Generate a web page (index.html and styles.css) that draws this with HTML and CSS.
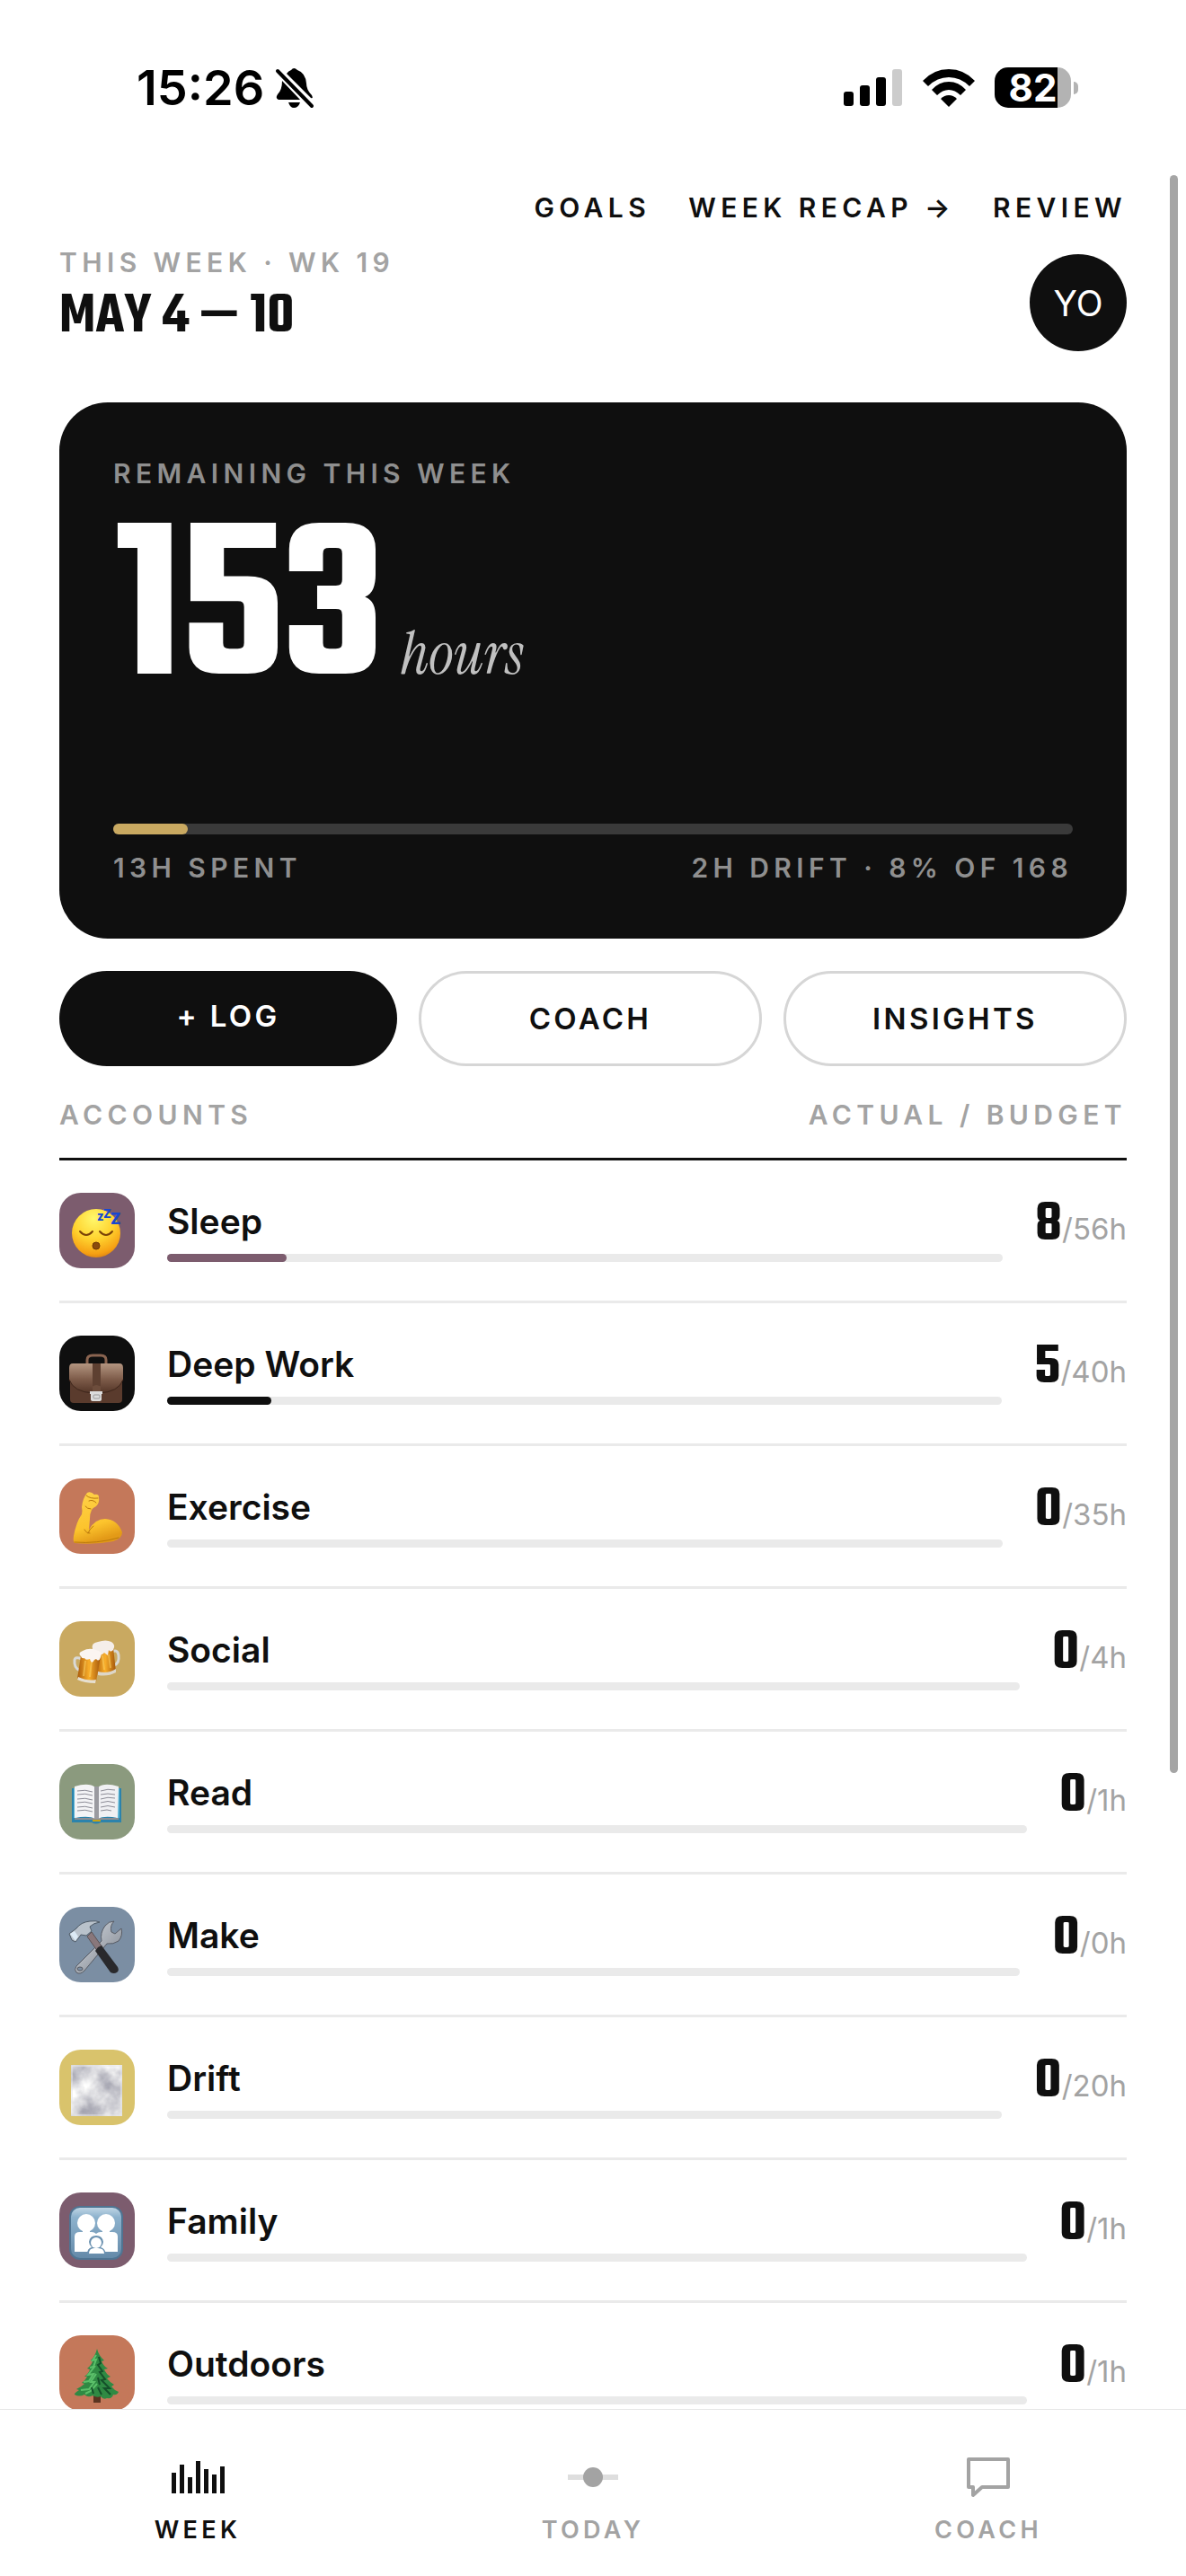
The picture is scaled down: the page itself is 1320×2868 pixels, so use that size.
FILE: index.html
```html
<!DOCTYPE html>
<html lang="en">
  <head>
    <meta charset="utf-8" />
    <meta name="viewport" content="width=device-width, initial-scale=1.0" />
    <title>Week</title>
    <link rel="stylesheet" href="styles.css">
  </head>
  <body>
    <div class="status-bar">
      <div class="status-left">
        <span class="clock">15:26</span>
        <svg class="bell" width="44" height="46" viewBox="0 0 44 46">
          <path d="M13 7Q15 4 18 3Q21 -1 25 3Q34 6 35 18Q35 25 41 31Q43 35 40 34Z" />
          <path d="M8 15L28 36H4Q0 34 3 30Q8 25 8 15Z" />
          <path d="M15 39H28Q26 45 21 45Q17 45 15 39Z" />
          <path d="M3 4L41 43" stroke="#000" stroke-width="4" stroke-linecap="round" />
        </svg>
      </div>
      <div class="status-right">
        <svg width="66" height="42" viewBox="0 0 66 42">
          <rect x="0" y="25" width="11" height="16" rx="3" />
          <rect x="18" y="18" width="11" height="23" rx="3" />
          <rect x="36" y="9" width="11" height="32" rx="3" />
          <rect x="54" y="0" width="11" height="41" rx="3" fill="#ccc" />
        </svg>
        <svg width="58" height="42" viewBox="0 0 58 42">
          <path d="M0 13Q12 0 29 0Q46 0 58 13L52 19Q42 9 29 9Q16 9 6 19Z" />
          <path d="M10 23Q18 14 29 14Q40 14 48 23L42 29Q36 23 29 23Q22 23 16 29Z" />
          <path d="M20 33Q24 29 29 29Q34 29 38 33L29 42Z" />
        </svg>
        <div class="battery"><span class="battery-level">82</span></div>
      </div>
    </div>

    <main class="screen">
      <nav class="top-links">
        <a href="#goals">GOALS</a>
        <a href="#recap">WEEK RECAP →</a>
        <a href="#review">REVIEW</a>
      </nav>

      <header class="header">
        <div>
          <div class="label">THIS WEEK · WK 19</div>
          <h1 class="dates">MAY 4 — 10</h1>
        </div>
        <button class="avatar">YO</button>
      </header>

      <section class="card">
        <div class="label">REMAINING THIS WEEK</div>
        <div class="remaining"><span class="big">153</span><em class="unit">hours</em></div>
        <div class="card-track"><div class="card-fill" style="width: 7.74%"></div></div>
        <div class="card-foot label"><span>13H SPENT</span><span>2H DRIFT · 8% OF 168</span></div>
      </section>

      <div class="actions">
        <a class="btn btn-dark" href="#log">+ LOG</a>
        <button class="btn">COACH</button>
        <button class="btn">INSIGHTS</button>
      </div>

      <div class="list-head label"><span>ACCOUNTS</span><span>ACTUAL / BUDGET</span></div>

      <ul class="accounts">
        <li class="row">
          <svg class="icon plum" viewBox="0 0 84 84">
            <defs>
              <radialGradient id="face" cx="0.45" cy="0.2" r="0.85">
                <stop offset="0" stop-color="#fff86b" />
                <stop offset="0.5" stop-color="#ffd32f" />
                <stop offset="0.85" stop-color="#f6a013" />
                <stop offset="1" stop-color="#d67a14" />
              </radialGradient>
            </defs>
            <circle cx="41" cy="45" r="27" fill="url(#face)" />
            <path d="M23 43Q30 51 37 43M45 43Q52 51 59 43" fill="none" stroke="#7b4308" stroke-width="2" stroke-linecap="round" />
            <ellipse cx="41" cy="59" rx="4" ry="4" fill="#8a4a0c" stroke="#6b3505" />
            <g fill="#1747d1" font-family="Inter, sans-serif" font-weight="800">
              <text x="42" y="31" font-size="13">z</text>
              <text x="49" y="28" font-size="13">Z</text>
              <text x="57" y="35" font-size="17">Z</text>
            </g>
          </svg>
          <div class="info">
            <div class="name">Sleep</div>
            <div class="track"><div class="fill plum" style="width: 14.3%"></div></div>
          </div>
          <div class="hours"><b>8</b>/56h</div>
        </li>

        <li class="row">
          <svg class="icon ink" viewBox="0 0 84 84">
            <defs>
              <linearGradient id="leather" x1="0" y1="0" x2="0" y2="1">
                <stop offset="0" stop-color="#b39580" />
                <stop offset="0.55" stop-color="#7c5a48" />
                <stop offset="1" stop-color="#543628" />
              </linearGradient>
            </defs>
            <path d="M31 32V27Q31 22 37 22H46Q52 22 52 27V32" fill="none" stroke="#8a6450" stroke-width="3" />
            <path d="M12 46H70V71Q70 75 66 75H16Q12 75 12 71Z" fill="#5a3b2d" />
            <path d="M15 31H67Q71 31 71 36V49Q66 63 44 64H38Q16 63 11 49V36Q11 31 15 31Z" fill="url(#leather)" />
            <path d="M11 49Q16 63 38 64H44Q66 63 71 49" fill="none" stroke="#3e261b" />
            <path d="M37 31H46V56H37Z" fill="#5e4031" />
            <path d="M37 57Q41 53 46 57V63H37Z" fill="#6d4d3c" />
            <path d="M34 62H48V65H47V71Q47 73 44 73H38Q35 73 35 71V65H34Z" fill="#dcdcdc" />
            <rect x="38" y="66" width="7" height="4" rx="1" fill="none" stroke="#999" />
          </svg>
          <div class="info">
            <div class="name">Deep Work</div>
            <div class="track"><div class="fill ink" style="width: 12.5%"></div></div>
          </div>
          <div class="hours"><b>5</b>/40h</div>
        </li>

        <li class="row">
          <svg class="icon clay" viewBox="0 0 84 84">
            <defs>
              <linearGradient id="skin" x1="0" y1="0" x2="0.3" y2="1">
                <stop offset="0" stop-color="#ffd24a" />
                <stop offset="0.7" stop-color="#fcc42d" />
                <stop offset="1" stop-color="#e39a17" />
              </linearGradient>
            </defs>
            <path d="M17 72Q15 70 16 64Q19 48 25 40Q26 36 25 32Q26 22 31 16Q35 14 39 18Q44 17 44 21Q45 27 41 31Q37 33 36 35Q34 39 34 45L33 57Q40 45 51 45Q65 46 70 60Q70 67 60 70Q40 74 17 72Z" fill="url(#skin)" />
            <path d="M32 61Q33 57 38 53M30 19Q34 23 43 22M33 25Q37 23 41 27M35 34Q31 34 29 31M28 57Q30 61 34 61M17 71Q42 73 66 66" fill="none" stroke="#b8780d" stroke-width="1" stroke-linecap="round" />
          </svg>
          <div class="info">
            <div class="name">Exercise</div>
            <div class="track"></div>
          </div>
          <div class="hours"><b>0</b>/35h</div>
        </li>

        <li class="row">
          <svg class="icon gold" viewBox="0 0 84 84">
            <defs>
              <linearGradient id="beer" x1="0" y1="0" x2="1" y2="0">
                <stop offset="0" stop-color="#a85a0c" />
                <stop offset="0.5" stop-color="#f9ae2a" />
                <stop offset="1" stop-color="#a3560b" />
              </linearGradient>
            </defs>
            <path d="M59 34Q65 31 66 38Q67 47 61 49" fill="none" stroke="#d9d9d6" stroke-width="3" />
            <path d="M39 31L60 29L63 56Q54 61 43 59Z" fill="url(#beer)" />
            <path d="M43 56Q54 59 63 53L63 57Q54 62 43 60Z" fill="#ddd6c8" />
            <path d="M37 31Q35 24 43 23Q52 20 58 23Q63 26 60 32Q57 35 55 32L54 38L50 35Q46 40 43 34Q39 36 37 31Z" fill="#f5eee9" />
            <path d="M25 42Q18 39 17 43Q16 52 23 55" fill="none" stroke="#d9d9d6" stroke-width="3" />
            <path d="M24 38L46 39L41 67Q30 69 20 64Z" fill="url(#beer)" />
            <path d="M21 62Q32 67 41 65L40 69Q28 69 20 65Z" fill="#e6dfd0" />
            <path d="M29 44L27 61M36 44L34 62M48 38L50 54M55 37L57 52" stroke="#ffd76b" stroke-width="2" opacity="0.5" />
            <path d="M24 39Q20 35 26 33Q33 29 41 32Q49 34 46 40Q44 46 41 42L39 43Q36 49 34 42Q29 44 28 41Q25 42 24 39Z" fill="#fbf5f1" />
          </svg>
          <div class="info">
            <div class="name">Social</div>
            <div class="track"></div>
          </div>
          <div class="hours"><b>0</b>/4h</div>
        </li>

        <li class="row">
          <svg class="icon sage" viewBox="0 0 84 84">
            <path d="M14 27H69V65H46Q41 68 36 65H14Z" fill="#2c83ac" />
            <path d="M16 27H20V60H16ZM63 27H67V60H63Z" fill="#57b3d4" />
            <path d="M17 60H66V62H17Z" fill="#8d8d92" />
            <path d="M17 25Q33 20 40 26V61Q33 57 17 60Z" fill="#f4f4f6" />
            <path d="M66 25Q50 20 43 26V61Q50 57 65 60Z" fill="#f0f0f3" />
            <path d="M39 25H44V61H39Z" fill="#9a9aa0" />
            <path d="M20 30Q29 28 37 31M20 34Q29 32 37 35M20 39Q29 37 37 40M20 43Q29 41 37 44M20 48Q29 46 37 49M20 52Q29 50 37 53M46 30Q54 27 62 29M46 34Q54 32 62 34M46 39Q54 36 62 38M46 43Q54 40 62 43M46 48Q54 45 62 48M46 52Q54 50 58 52" fill="none" stroke="#8c8c96" stroke-width="1" />
            <path d="M37 62H46V64H37Z" fill="#c8a415" />
          </svg>
          <div class="info">
            <div class="name">Read</div>
            <div class="track"></div>
          </div>
          <div class="hours"><b>0</b>/1h</div>
        </li>

        <li class="row">
          <svg class="icon slate" viewBox="0 0 84 84">
            <defs>
              <linearGradient id="steel" x1="0" y1="0" x2="1" y2="1">
                <stop offset="0" stop-color="#d8dfe6" />
                <stop offset="1" stop-color="#7b7f88" />
              </linearGradient>
            </defs>
            <path d="M19 66L47 38Q45 29 51 21Q55 16 61 16Q56 21 58 28L62 30L69 24Q71 32 66 38Q60 42 53 41L28 71Q23 76 19 73Q16 70 19 66Z" fill="url(#steel)" stroke="#575b64" />
            <ellipse cx="23" cy="69" rx="3" ry="2" fill="#7b8ea3" stroke="#565961" />
            <path d="M31 33L36 28L48 45L43 50Z" fill="#89777b" stroke="#5c5356" />
            <path d="M43 45L47 43L65 67Q67 71 64 73Q61 75 57 73L40 49Z" fill="#29292c" />
            <path d="M11 30L15 27L19 24Q24 17 34 16Q41 15 45 17Q38 18 34 22L36 27L30 32L24 31L22 34L18 39L14 37Z" fill="#b9c2cb" stroke="#4e5a66" />
            <path d="M12 30L18 38L21 33L17 27Z" fill="#dceaf5" />
          </svg>
          <div class="info">
            <div class="name">Make</div>
            <div class="track"></div>
          </div>
          <div class="hours"><b>0</b>/0h</div>
        </li>

        <li class="row">
          <svg class="icon sand" viewBox="0 0 84 84">
            <defs>
              <filter id="fog" x="0" y="0" width="1" height="1" color-interpolation-filters="sRGB">
                <feTurbulence type="fractalNoise" baseFrequency="0.035" numOctaves="4" seed="7" />
                <feColorMatrix values="0.7 0 0 0 0.48  0.7 0 0 0 0.48  0.6 0 0 0 0.55  0 0 0 0 1" />
              </filter>
            </defs>
            <rect x="13" y="17" width="57" height="57" fill="#d6d6da" />
            <rect x="13" y="17" width="57" height="57" filter="url(#fog)" />
            <rect x="14" y="18" width="55" height="55" fill="none" stroke="#e6e6e8" />
          </svg>
          <div class="info">
            <div class="name">Drift</div>
            <div class="track"></div>
          </div>
          <div class="hours"><b>0</b>/20h</div>
        </li>

        <li class="row">
          <svg class="icon plum" viewBox="0 0 84 84">
            <defs>
              <linearGradient id="tile" x1="0" y1="0" x2="0" y2="1">
                <stop offset="0" stop-color="#c3d8e6" />
                <stop offset="0.2" stop-color="#8db2cd" />
                <stop offset="1" stop-color="#6489a8" />
              </linearGradient>
            </defs>
            <rect x="12" y="16" width="58" height="58" rx="11" fill="url(#tile)" stroke="#4f7492" stroke-width="2" />
            <g fill="#fff">
              <circle cx="30" cy="34" r="10" />
              <circle cx="52" cy="34" r="10" />
              <path d="M17 66V49Q17 44 23 44H36Q39 44 41 46Q43 44 46 44H59Q65 44 65 49V66Z" />
              <path d="M26 41H34V46H26ZM48 41H56V46H48Z" />
            </g>
            <path d="M31 69Q31 62 36 61Q33 58 33 55Q34 48 41 48Q48 48 49 55Q49 58 46 61Q51 62 52 69Z" fill="#6b91b0" />
            <circle cx="41" cy="56" r="6" fill="#fff" />
            <path d="M33 68Q33 62 39 62H43Q50 62 50 68Z" fill="#fff" />
          </svg>
          <div class="info">
            <div class="name">Family</div>
            <div class="track"></div>
          </div>
          <div class="hours"><b>0</b>/1h</div>
        </li>

        <li class="row">
          <svg class="icon clay" viewBox="0 0 84 84">
            <rect x="38" y="64" width="8" height="11" fill="#5a3320" />
            <path d="M42 15Q44 23 50 28L47 29Q49 34 54 37L50 38Q52 43 57 46L53 48Q56 52 61 55L58 57Q61 61 66 63Q64 67 60 66Q59 71 53 70Q49 72 46 68Q42 70 37 67Q32 70 28 66Q22 69 17 66Q16 65 22 61L19 60Q25 57 28 54L25 53Q29 50 31 46L28 46Q33 42 34 38L31 37Q36 33 37 29L35 28Q40 23 42 15Z" fill="#2f8a43" />
            <path d="M41 22L37 28L41 27L38 35L34 36M40 34L32 44L38 43L33 51L27 52M41 43L35 52L39 52L33 60L24 61M42 54L35 62L29 65" fill="none" stroke="#5cc06a" stroke-width="2" />
            <path d="M44 24L46 31L43 33L48 40L45 41L51 49L47 50L56 59L50 59L57 66M43 58L47 66M36 58L38 65M43 47L45 55" fill="none" stroke="#15502a" stroke-width="2" />
          </svg>
          <div class="info">
            <div class="name">Outdoors</div>
            <div class="track"></div>
          </div>
          <div class="hours"><b>0</b>/1h</div>
        </li>
      </ul>
    </main>
    <div class="scroll-thumb"></div>

    <nav class="tabs">
      <a class="tab active" href="#week">
        <svg width="60" height="48" viewBox="0 0 60 48">
          <path d="M1 18h5v23H1zM10 9h5v32h-5zM19 23h5v18h-5zM28 5h5v36h-5zM37 14h5v27h-5zM46 20h5v21h-5zM55 11h5v30h-5z" fill="currentColor" />
        </svg>
        WEEK
      </a>
      <a class="tab" href="#today">
        <svg width="56" height="48" viewBox="0 0 56 48">
          <rect x="0" y="20" width="56" height="6" fill="#dedede" />
          <circle cx="28" cy="23" r="11" fill="currentColor" />
        </svg>
        TODAY
      </a>
      <a class="tab" href="#coach">
        <svg width="50" height="48" viewBox="0 0 50 48">
          <path d="M3 3H47V34H18L8 43V34H3Z" fill="none" stroke="currentColor" stroke-width="4" stroke-linejoin="round" />
        </svg>
        COACH
      </a>
    </nav>
  </body>
</html>
```
FILE: styles.css
```css
body {
  display: flex;
  flex-direction: column;
  height: 100vh;
  margin: 0;
  background-color: #fff;
  color: #0f0f0f;
  font-family: Inter, "Liberation Sans", sans-serif;
  overflow: hidden;
}

a {
  color: inherit;
  text-decoration: none;
}

button {
  border: none;
  color: inherit;
  font-family: inherit;
  cursor: pointer;
}

/* Status bar */
.status-bar {
  display: flex;
  flex-shrink: 0;
  justify-content: space-between;
  align-items: center;
  height: 195px;
  padding: 0 120px 0 152px;
  color: #000;
}

.status-left,
.status-right {
  display: flex;
  align-items: center;
}

.status-left {
  gap: 12px;
}

.status-right {
  gap: 22px;
}

.clock {
  font-size: 54px;
  font-weight: 600;
}

.battery {
  display: flex;
  align-items: center;
  width: 93px;
}

.battery::after {
  content: "";
  width: 5px;
  height: 14px;
  margin-left: 3px;
  border-radius: 0 7px 7px 0;
  background-color: #b3b3b3;
}

.battery-level {
  flex: 1;
  height: 45px;
  border-radius: 15px;
  background: linear-gradient(to right, #000 82%, #b3b3b3 82%);
  color: #fff;
  font-size: 42px;
  font-weight: 700;
  line-height: 45px;
  text-align: center;
}

/* Scrolling area */
.screen {
  flex: 1;
  min-height: 0;
  padding: 18px 66px 0;
  overflow-y: auto;
  scrollbar-width: none;
}

.top-links {
  display: flex;
  justify-content: flex-end;
  gap: 42px;
  font-size: 30px;
  font-weight: 600;
  line-height: 36px;
  letter-spacing: 0.18em;
}

.label {
  color: #a3a3a3;
  font-size: 30px;
  font-weight: 600;
  line-height: 38px;
  letter-spacing: 0.18em;
}

.header {
  display: flex;
  justify-content: space-between;
  padding-top: 24px;
}

.dates {
  margin: 0;
  font-family: Teko, "Liberation Sans Narrow", "Roboto Condensed", sans-serif;
  font-size: 66px;
  font-weight: 600;
  line-height: 84px;
}

.avatar {
  width: 108px;
  height: 108px;
  margin: 10px 0 57px;
  padding: 0;
  border-radius: 50%;
  background-color: #0f0f0f;
  color: #fff;
  font-size: 39px;
}

.card {
  padding: 60px;
  border-radius: 54px;
  background-color: #0f0f0f;
  color: #fff;
}

.card .label {
  color: #8f8f8f;
}

.remaining {
  display: flex;
  align-items: baseline;
  gap: 20px;
  height: 371px;
}

.big {
  font-family: Teko, "Liberation Sans Narrow", "Roboto Condensed", sans-serif;
  font-size: 264px;
  font-weight: 600;
  line-height: 280px;
  letter-spacing: -0.01em;
}

.unit {
  color: #c0c0c0;
  font-family: "Instrument Serif", "Liberation Serif", serif;
  font-size: 66px;
}

.card-track {
  height: 12px;
  border-radius: 6px;
  background-color: #3a3a3a;
}

.card-fill {
  height: 100%;
  border-radius: 6px;
  background-color: #c9a961;
}

.card-foot {
  display: flex;
  justify-content: space-between;
  margin-top: 18px;
}

.actions {
  display: flex;
  gap: 24px;
  margin-top: 36px;
}

.btn {
  box-sizing: content-box;
  flex: 1;
  padding: 30px 0;
  border: 3px solid #d6d6d6;
  border-radius: 54px;
  background-color: #fff;
  font-size: 33px;
  font-weight: 600;
  line-height: 40px;
  letter-spacing: 0.1em;
  text-align: center;
}

.btn-dark {
  border: none;
  background-color: #0f0f0f;
  color: #fff;
}

.list-head {
  display: flex;
  justify-content: space-between;
  padding: 35px 0 29px;
  border-bottom: 3px solid #0f0f0f;
}

.accounts {
  margin: 0;
  padding: 0;
  list-style: none;
}

.row {
  display: flex;
  align-items: center;
  gap: 36px;
  padding: 36px 0;
  border-bottom: 3px solid #eaeaea;
}

.icon {
  flex-shrink: 0;
  width: 84px;
  height: 84px;
  border-radius: 24px;
}

.info {
  flex: 1;
}

.name {
  margin-bottom: 12px;
  font-size: 39px;
  font-weight: 600;
  line-height: 48px;
}

.track {
  height: 9px;
  border-radius: 5px;
  background-color: #eaeaea;
}

.fill {
  height: 100%;
  border-radius: 5px;
}

.hours {
  padding-bottom: 8px;
  color: #a3a3a3;
  font-size: 33px;
  line-height: 60px;
}

.hours b {
  color: #0f0f0f;
  font-family: Teko, "Liberation Sans Narrow", "Roboto Condensed", sans-serif;
  font-size: 66px;
  font-weight: 600;
}

.plum { background-color: #7c5c6e; }
.ink { background-color: #0f0f0f; }
.clay { background-color: #c4785a; }
.gold { background-color: #c9a961; }
.sage { background-color: #8b9a7e; }
.slate { background-color: #7b8ea3; }
.sand { background-color: #d9c36c; }

.scroll-thumb {
  position: absolute;
  top: 195px;
  right: 9px;
  width: 9px;
  height: 1779px;
  border-radius: 5px;
  background-color: #a5a5a5;
}

/* Bottom tabs */
.tabs {
  display: flex;
  flex-shrink: 0;
  height: 185px;
  border-top: 1px solid #e6e6e6;
  background-color: #fff;
}

.tab {
  display: flex;
  flex: 1;
  flex-direction: column;
  align-items: center;
  gap: 18px;
  padding-top: 52px;
  color: #a3a3a3;
  font-size: 27px;
  font-weight: 600;
  line-height: 32px;
  letter-spacing: 0.16em;
}

.tab.active {
  color: #0f0f0f;
}
```
